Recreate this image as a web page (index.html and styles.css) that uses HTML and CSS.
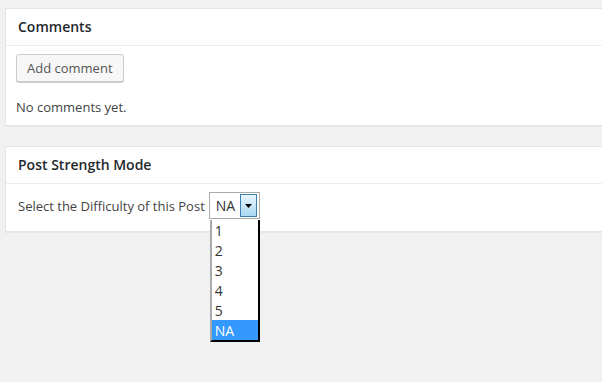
FILE: index.html
```html
<!DOCTYPE html>
<html>
<head>
<meta charset="utf-8">
<link rel="stylesheet" href="styles.css">
</head>
<body>
<div class="page">
  <div class="postbox">
    <h2 class="hndle">Comments</h2>
    <div class="inside comments-inside">
      <button class="button">Add comment</button>
      <p class="no-comments">No comments yet.</p>
    </div>
  </div>
  <div class="postbox second">
    <h2 class="hndle">Post Strength Mode</h2>
    <div class="inside strength-inside">
      <label class="label">Select the Difficulty of this Post</label>
      <div class="select-wrap">
        <div class="select">
          <span class="select-value">NA</span>
          <span class="select-arrow">
            <svg width="7" height="4" viewBox="0 0 7 4"><path d="M0 0H7L3.5 4Z" fill="#000"/></svg>
          </span>
        </div>
        <ul class="options">
          <li>1</li>
          <li>2</li>
          <li>3</li>
          <li>4</li>
          <li>5</li>
          <li class="selected">NA</li>
        </ul>
      </div>
    </div>
  </div>
</div>
</body>
</html>
```

FILE: styles.css
```css
html {
  background: #f1f1f1;
}
body {
  margin: 0;
  padding: 0;
  min-height: 382px;
  font-family: "Open Sans", "Liberation Sans", sans-serif;
  font-size: 13px;
  color: #444;
}
.page {
  padding: 8px 0 0 5px;
}
.postbox {
  background: #fff;
  border: 1px solid #e5e5e5;
  border-right: none;
  box-shadow: 0 1px 1px rgba(0,0,0,.04);
}
.postbox.second {
  position: relative;
  z-index: 1;
  margin-top: 20px;
}
.hndle {
  margin: 0;
  padding: 8px 12px;
  font-size: 14px;
  line-height: 20px;
  font-weight: 600;
  color: #23282d;
  border-bottom: 1px solid #eee;
}
.comments-inside {
  padding: 8px 10px 9px 10px;
}
.button {
  display: block;
  height: 28px;
  padding: 0 10px 1px;
  font-family: inherit;
  font-size: 13px;
  line-height: 26px;
  color: #555;
  background: #f7f7f7;
  border: 1px solid #ccc;
  border-radius: 3px;
  box-shadow: 0 1px 0 #ccc;
  box-sizing: border-box;
}
.no-comments {
  margin: 16px 0 0;
  line-height: 18px;
}
.strength-inside {
  display: flex;
  align-items: center;
  padding: 8px 12px 12px;
}
.label {
  line-height: 18px;
  margin-right: 4px;
  color: #444;
}
.select-wrap {
  position: relative;
}
.select {
  display: flex;
  align-items: center;
  box-sizing: border-box;
  width: 51px;
  height: 27px;
  border: 1px solid #a9a9a9;
  background: #fff;
  padding: 1px 2px 1px 6px;
}
.select-value {
  flex: 1;
  font-size: 14px;
  color: #333;
}
.select-arrow {
  box-sizing: border-box;
  width: 17px;
  height: 23px;
  border: 1px solid #3c7fb1;
  background: linear-gradient(#e8f5fc, #a9d9f4);
  display: flex;
  align-items: center;
  justify-content: center;
}
.options {
  position: absolute;
  left: 1px;
  top: 28px;
  z-index: 10;
  margin: 0;
  padding: 0;
  list-style: none;
  width: 50px;
  box-sizing: border-box;
  background: #fff;
  border-left: 2px solid #ababab;
  border-right: 2px solid #000;
  border-bottom: 2px solid #000;
}
.options li {
  height: 20px;
  line-height: 21px;
  padding-left: 3px;
  font-size: 14px;
  color: #333;
}
.options li.selected {
  background: #3399ff;
  color: #fff;
}
```
